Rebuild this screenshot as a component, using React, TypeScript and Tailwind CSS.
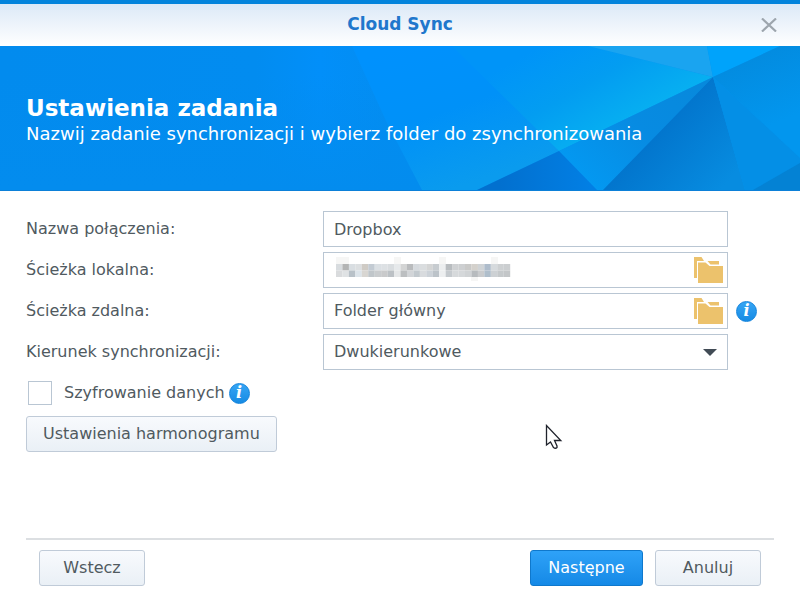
import React from "react";

const FIELD = "h-9 border border-[#b9c6d3] bg-white text-[#505a5f]";
const PLAIN_BUTTON =
  "h-9 rounded-[3px] border border-[#c0cbd8] bg-linear-to-b from-[#f8fafd] to-[#eaf0f6] text-[#505a5f]";

const MOSAIC_TOP = ["#d8dcdf", "#b3b4b4", "#d9dee2", "#dcdfe1", "#cfcbc5", "#c3cbd3", "#dbe0e4", "#dde1e4", "#d9dde0", "#e6e9eb", "#d3d4d4", "#b9bbbd", "#d6dade", "#dadddf", "#d4d5d5", "#c7ccd0", "#eceeef", "#b8bcbf", "#cfd1d3", "#cdcfd1", "#c9c9c8", "#d4d1cc", "#cfd3d6", "#aebccb", "#d6dadd", "#cdd0d2", "#cbced0"];
const MOSAIC_BOTTOM = ["#d9dbdd", "#dfe2e4", "#b8c1c8", "#dce4ea", "#d8d6d2", "#c0c6ca", "#c9ccce", "#c9cacb", "#bcc1c5", "#e5e7e8", "#bcbfc1", "#d2d5d8", "#c2c9ce", "#d8dbde", "#ccd2d8", "#bcc3c9", "#edeff0", "#c5cace", "#d6d9db", "#d5d8da", "#d0d3d5", "#b7bbbe", "#c9cbcd", "#afbecb", "#cdd1d4", "#c5c9cb", "#c3c6c8"];

function Mosaic() {
  return (
    <svg width="182" height="26" viewBox="0 0 182 26" className="shrink-0" aria-hidden="true">
      <g fill="#f6f6f5">
        <rect x="2" y="0" width="13" height="7" />
        <rect x="60" y="0" width="7" height="7" />
        <rect x="105" y="0" width="7" height="7" />
        <rect x="157" y="0" width="7" height="7" />
        <rect x="137" y="19" width="7" height="5" />
      </g>
      {MOSAIC_TOP.map((c, i) => (
        <rect key={i} x={2 + i * 6.45} y="7" width="6.500" height="6.500" fill={c} />
      ))}
      {MOSAIC_BOTTOM.map((c, i) => (
        <rect key={i} x={2 + i * 6.45} y="13.500" width="6.500" height="6.500" fill={c} />
      ))}
    </svg>
  );
}

function FolderIcon() {
  return (
    <svg width="29" height="27" viewBox="0 0 29 27" fill="#ecc26c" className="block" aria-hidden="true">
      <path d="M0 0H7.500L10 4H3V21H0Z" />
      <path d="M13.500 4H25V7.500H16.500Z" />
      <path d="M4 5.500H11.500L15.500 9H29V26H4Z" />
    </svg>
  );
}

function Info() {
  return (
    <button
      type="button"
      aria-label="Informacje"
      className="flex size-[21px] shrink-0 items-center justify-center rounded-full border border-[#1283dc] bg-linear-to-b from-[#35a5f4] to-[#158be4] font-['DejaVu_Serif',serif] text-base leading-none font-bold text-white italic"
    >
      i
    </button>
  );
}

function Row({ id, label, info, children }: { id: string; label: string; info?: boolean; children: React.ReactNode }) {
  return (
    <div className="flex items-center">
      <label htmlFor={id} className="w-[297px] shrink-0">
        {label}
      </label>
      <div className="min-w-0 flex-1">{children}</div>
      <div className="flex w-[46px] shrink-0 pl-2">{info && <Info />}</div>
    </div>
  );
}

function Facets() {
  return (
    <svg
      viewBox="0 0 800 144"
      preserveAspectRatio="xMaxYMid slice"
      className="absolute inset-0 size-full"
      aria-hidden="true"
    >
      <defs>
        <linearGradient id="base" x1="0" x2="1" y1="0" y2="0">
          <stop offset="0" stopColor="#028bee" />
          <stop offset=".32" stopColor="#028cf0" />
          <stop offset=".4" stopColor="#028ff9" />
          <stop offset=".48" stopColor="#038df2" />
          <stop offset="1" stopColor="#0397f0" />
        </linearGradient>
        <linearGradient id="shade" x1="0" x2="0" y1="0" y2="1">
          <stop offset=".2" stopColor="#038cee" stopOpacity="0" />
          <stop offset="1" stopColor="#038cee" />
        </linearGradient>
        <linearGradient id="left" gradientUnits="userSpaceOnUse" x1="400" y1="0" x2="450" y2="144">
          <stop offset="0" stopColor="#0091fd" />
          <stop offset=".5" stopColor="#0091f8" />
          <stop offset="1" stopColor="#0a9bee" />
        </linearGradient>
        <linearGradient id="glow" gradientUnits="userSpaceOnUse" x1="540" y1="0" x2="595" y2="98">
          <stop offset="0" stopColor="#0094f8" />
          <stop offset=".5" stopColor="#039df1" />
          <stop offset="1" stopColor="#07b0f1" />
        </linearGradient>
        <linearGradient id="mid" gradientUnits="userSpaceOnUse" x1="700" y1="30" x2="590" y2="144">
          <stop offset="0" stopColor="#0789dc" />
          <stop offset=".5" stopColor="#078be2" />
          <stop offset="1" stopColor="#0399f2" />
        </linearGradient>
        <linearGradient id="deep" gradientUnits="userSpaceOnUse" x1="650" y1="80" x2="720" y2="144">
          <stop offset="0" stopColor="#0273cb" />
          <stop offset="1" stopColor="#078ce0" />
        </linearGradient>
        <linearGradient id="low" gradientUnits="userSpaceOnUse" x1="500" y1="144" x2="590" y2="144">
          <stop offset="0" stopColor="#0270cf" />
          <stop offset="1" stopColor="#027fe4" />
        </linearGradient>
        <linearGradient id="right" gradientUnits="userSpaceOnUse" x1="740" y1="10" x2="770" y2="80">
          <stop offset="0" stopColor="#038bdf" />
          <stop offset="1" stopColor="#0296ee" />
        </linearGradient>
      </defs>
      <rect width="800" height="144" fill="url(#base)" />
      <rect width="430" height="144" fill="url(#shade)" />
      <path d="M352 0H467L559 105L477 144H422L387 77Z" fill="url(#left)" />
      <path d="M452 0H588L713 31L559 105Z" fill="url(#glow)" />
      <path d="M588 0H707L713 31Z" fill="#1aa4f0" />
      <path d="M707 0H780L713 31Z" fill="#00a3fb" />
      <path d="M713 31L780 0H800V112Z" fill="url(#right)" />
      <path d="M713 31L559 105L597 144H603Z" fill="url(#mid)" />
      <path d="M559 105L597 144H477Z" fill="url(#low)" />
      <path d="M713 31L745 144H603Z" fill="url(#deep)" />
      <path d="M713 31L800 112V144H745Z" fill="#048fe6" />
      <path d="M753 144L800 117V144Z" fill="#0482d4" />
    </svg>
  );
}

export default function App() {
  return (
    <div className="relative flex min-h-screen flex-col bg-white font-['DejaVu_Sans',Verdana,sans-serif] text-base text-[#505a5f]">
      <header className="flex h-[46px] items-center border-t-4 border-[#0384dc] bg-linear-to-b from-[#dce9f7] to-white px-2.5">
        <h1 className="flex-1 pl-[42px] text-center text-[17px] font-bold text-[#2077cc]">Cloud Sync</h1>
        <button type="button" aria-label="Zamknij" className="flex size-[42px] items-center justify-center">
          <svg width="16" height="14" viewBox="0 0 16 14" stroke="#9da5ad" strokeWidth="2.200" aria-hidden="true">
            <path d="M1 .5L15 13.500M15 .5L1 13.500" />
          </svg>
        </button>
      </header>

      <section className="relative flex h-[145px] flex-col justify-center overflow-hidden border-b border-[#0c80d8] px-[26px] pt-1 text-white">
        <Facets />
        <h2 className="relative text-[23px] leading-7 font-bold">Ustawienia zadania</h2>
        <p className="relative text-lg leading-6">Nazwij zadanie synchronizacji i wybierz folder do zsynchronizowania</p>
      </section>

      <form className="flex flex-1 flex-col px-[26px] pt-5 pb-2.5" onSubmit={(e) => e.preventDefault()}>
        <div className="flex flex-col gap-[5px]">
          <Row id="name" label="Nazwa połączenia:">
            <input id="name" defaultValue="Dropbox" className={`${FIELD} w-full px-2.5`} />
          </Row>
          <Row id="local" label="Ścieżka lokalna:">
            <div className={`${FIELD} flex items-center pr-1 pl-2.5`}>
              <Mosaic />
              <input id="local" className="min-w-0 flex-1" />
              <button type="button" aria-label="Wybierz folder">
                <FolderIcon />
              </button>
            </div>
          </Row>
          <Row id="remote" label="Ścieżka zdalna:" info>
            <div className={`${FIELD} flex items-center pr-1 pl-2.5`}>
              <input id="remote" defaultValue="Folder główny" className="min-w-0 flex-1" />
              <button type="button" aria-label="Wybierz folder">
                <FolderIcon />
              </button>
            </div>
          </Row>
          <Row id="direction" label="Kierunek synchronizacji:">
            <div className="relative">
              <select id="direction" className={`${FIELD} w-full appearance-none px-2.5`}>
                <option>Dwukierunkowe</option>
              </select>
              <svg
                width="14"
                height="7"
                viewBox="0 0 14 7"
                fill="#414b55"
                className="pointer-events-none absolute top-[15px] right-[11px]"
                aria-hidden="true"
              >
                <path d="M0 0H14L7 7Z" />
              </svg>
            </div>
          </Row>
          <div className="flex h-9 items-center">
            <input
              id="encrypt"
              type="checkbox"
              className="mr-3 ml-0.5 size-6 shrink-0 appearance-none border border-[#b9c6d3] bg-white checked:bg-[#1b90ea]"
            />
            <label htmlFor="encrypt" className="mr-1">
              Szyfrowanie danych
            </label>
            <Info />
          </div>
          <button type="button" className={`${PLAIN_BUTTON} self-start px-4`}>
            Ustawienia harmonogramu
          </button>
        </div>

        <footer className="mt-auto flex gap-3 border-t-2 border-[#dcdfe2] px-[13px] pt-2.5">
          <button type="button" className={`${PLAIN_BUTTON} min-w-[106px] px-4`}>
            Wstecz
          </button>
          <button
            type="submit"
            className="ml-auto h-9 min-w-[113px] rounded-[3px] border border-[#0f78cc] bg-linear-to-b from-[#2ea2f8] to-[#1489e6] px-4 text-white"
          >
            Następne
          </button>
          <button type="button" className={`${PLAIN_BUTTON} min-w-[106px] px-4`}>
            Anuluj
          </button>
        </footer>
      </form>

      <svg
        width="18"
        height="26"
        viewBox="0 0 18 26"
        className="pointer-events-none absolute top-[424px] left-[545px]"
        fill="white"
        stroke="#20232c"
        strokeWidth="1.300"
        aria-hidden="true"
      >
        <path d="M1.500 1.500V21L5.500 18L8.500 23.500Q10.500 25 12 23.500L12 22L9.500 16.500H15.800Z" />
      </svg>
    </div>
  );
}
